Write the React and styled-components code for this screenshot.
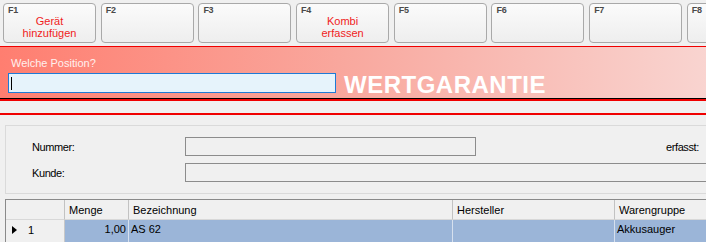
import React from "react";
import styled, { createGlobalStyle } from "styled-components";

const Global = createGlobalStyle`
  html, body { margin: 0; padding: 0; background: #f0f0f0; overflow: hidden; }
  body { font-family: "Liberation Sans", Arial, sans-serif; width: 706px; height: 242px; }
  * { box-sizing: border-box; }
`;

const Page = styled.div`
  width: 706px;
  height: 242px;
  overflow: hidden;
  background: #f0f0f0;
`;

const Toolbar = styled.div`
  display: flex;
  gap: 4.7px;
  height: 46px;
  padding: 3px 0 0 3px;
  white-space: nowrap;
`;

const FKey = styled.div`
  flex: 0 0 93px;
  height: 40px;
  border: 1px solid #a9a9a9;
  border-radius: 4px;
  background: linear-gradient(#fbfbfb, #eeeeee);
  display: flex;
  flex-direction: column;
`;

const KeyLabel = styled.div`
  font-size: 9px;
  font-weight: bold;
  line-height: 9px;
  color: #4a4a4a;
  padding: 2px 0 0 4px;
  letter-spacing: -0.3px;
`;

const KeyCaption = styled.div`
  text-align: center;
  font-size: 11px;
  line-height: 12px;
  color: #f01c1c;
  white-space: normal;
`;

const Banner = styled.div`
  border-top: 1px solid #f00000;
  border-bottom: 1px solid #000;
  background: linear-gradient(90deg, #ff7e70 0%, #f9a79d 48%, #f9d4d0 100%);
  padding: 10px 0 5px 8px;
`;

const Prompt = styled.div`
  font-size: 11px;
  line-height: 13px;
  color: #fff0ee;
  padding-left: 3px;
  margin-bottom: 3px;
`;

const PromptRow = styled.div`
  display: flex;
  align-items: flex-end;
  gap: 8px;
`;

const Field = styled.div`
  width: 328px;
  height: 20px;
  border: 1px solid #1e7bd6;
  background: #e6f3fb;
  padding: 3px 0 0 2px;
`;

const Caret = styled.span`
  display: block;
  width: 1px;
  height: 13px;
  background: #000;
`;

const Title = styled.div`
  font-size: 24px;
  font-weight: bold;
  letter-spacing: 0.5px;
  line-height: 20px;
  color: #fff;
  margin-bottom: -2px;
  white-space: nowrap;
`;

const Rule = styled.div`
  height: ${(p) => p.$h}px;
  background: ${(p) => p.$color};
  margin-top: ${(p) => p.$mt || 0}px;
`;

const Group = styled.div`
  margin: 10px 0 0 5px;
  width: 800px;
  border: 1px solid #dadada;
  padding: 11px 0 11px 26px;
  display: grid;
  grid-template-columns: 153px 291px auto;
  row-gap: 7px;
  align-items: center;
`;

const Label = styled.div`
  font-size: 11px;
  letter-spacing: -0.4px;
  color: #000;
`;

const Box = styled.div`
  height: 19px;
  border: 1px solid #8c8c8c;
  background: #f0f0f0;
  grid-column: ${(p) => (p.$wide ? "2 / 4" : "auto")};
`;

const SideLabel = styled(Label)`
  margin-left: 190px;
`;

const Grid = styled.div`
  margin: 5px 0 0 5px;
  border-top: 1px solid #8a8a8a;
  border-left: 1px solid #8a8a8a;
  display: grid;
  grid-template-columns: 59px 64px 324px 162px 200px;
  font-size: 11px;
`;

const HeadCell = styled.div`
  height: 20px;
  background: #f0f0f0;
  border-bottom: 1px solid #d8d8d8;
  border-right: 1px solid #c2c2c2;
  padding: 4px 0 0 4px;
  line-height: 13px;
  color: #000;
  white-space: nowrap;
`;

const RowHead = styled.div`
  height: 22px;
  background: #f0f0f0;
  border-right: 1px solid #c8c8c8;
  display: flex;
  align-items: center;
  padding: 0 0 2px 6px;
  gap: 11px;
  color: #000;
`;

const Cell = styled.div`
  height: 22px;
  background: #9bb5d8;
  border-right: 1px solid #d6e0ee;
  line-height: 18px;
  padding: 0 2px;
  text-align: ${(p) => (p.$right ? "right" : "left")};
  color: #000;
  white-space: nowrap;
`;

const keys = [
  { k: "F1", c: ["Gerät", "hinzufügen"] },
  { k: "F2" },
  { k: "F3" },
  { k: "F4", c: ["Kombi", "erfassen"] },
  { k: "F5" },
  { k: "F6" },
  { k: "F7" },
  { k: "F8" },
];

export default function App() {
  return (
    <Page>
      <Global />
      <Toolbar>
        {keys.map((f) => (
          <FKey key={f.k}>
            <KeyLabel>{f.k}</KeyLabel>
            {f.c && (
              <KeyCaption>
                {f.c[0]}
                <br />
                {f.c[1]}
              </KeyCaption>
            )}
          </FKey>
        ))}
      </Toolbar>
      <Banner>
        <Prompt>Welche Position?</Prompt>
        <PromptRow>
          <Field>
            <Caret />
          </Field>
          <Title>WERTGARANTIE</Title>
        </PromptRow>
      </Banner>
      <Rule $h={2} $color="#f00000" />
      <Rule $h={2} $color="#f00000" $mt={12} />
      <Group>
        <Label>Nummer:</Label>
        <Box />
        <SideLabel>erfasst:</SideLabel>
        <Label>Kunde:</Label>
        <Box $wide />
      </Group>
      <Grid>
        <HeadCell />
        <HeadCell>Menge</HeadCell>
        <HeadCell>Bezeichnung</HeadCell>
        <HeadCell>Hersteller</HeadCell>
        <HeadCell>Warengruppe</HeadCell>
        <RowHead>
          <svg width="5" height="8" viewBox="0 0 5 8">
            <polygon points="0,0 5,4 0,8" fill="#000" />
          </svg>
          <span>1</span>
        </RowHead>
        <Cell $right>1,00</Cell>
        <Cell>AS 62</Cell>
        <Cell />
        <Cell>Akkusauger</Cell>
      </Grid>
    </Page>
  );
}
